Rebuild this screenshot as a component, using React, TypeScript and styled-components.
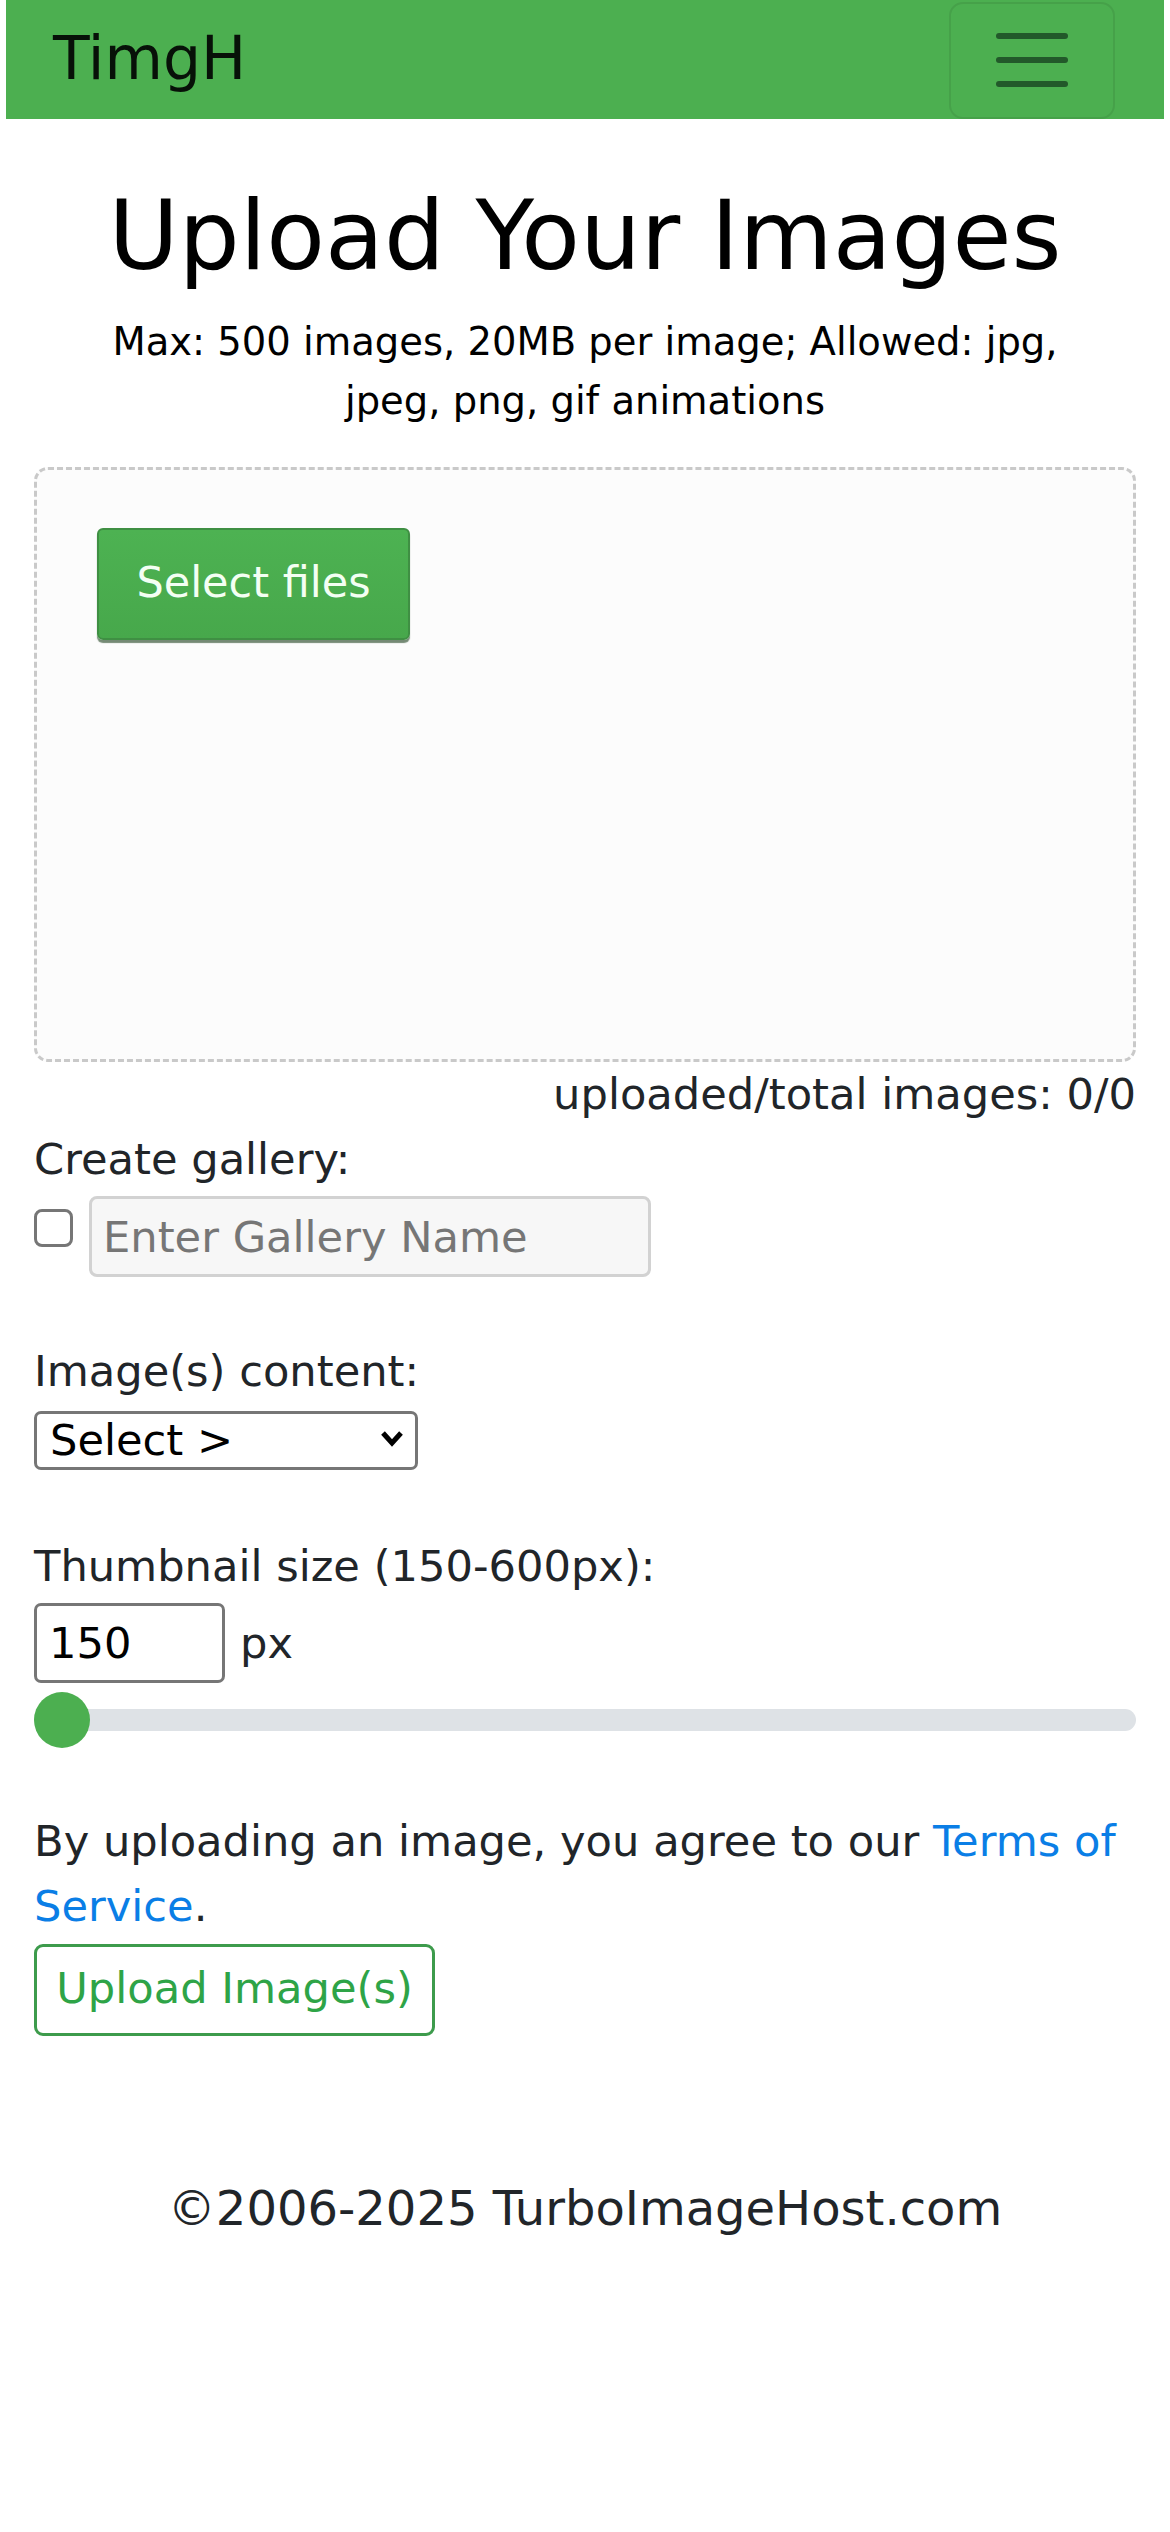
import styled, { createGlobalStyle } from "styled-components";

const GlobalStyle = createGlobalStyle`
  html, body {
    margin: 0;
    padding: 0;
    background: #fff;
  }
  body {
    font-family: "DejaVu Sans", "Noto Sans", sans-serif;
    font-size: 43.2px;
    line-height: 64.8px;
    color: #212529;
  }
  * {
    box-sizing: border-box;
  }
`;

const Page = styled.div`
  padding: 0 6px;
`;

const Navbar = styled.nav`
  height: 119px;
  background: #4caf50;
  display: flex;
  align-items: center;
  justify-content: space-between;
  padding: 0 49px 0 47px;
`;

const Brand = styled.a`
  font-size: 60px;
  line-height: 1;
  color: rgba(0, 0, 0, 0.9);
  text-decoration: none;
  padding-bottom: 4px;
`;

const Toggler = styled.button`
  width: 166px;
  height: 117px;
  border: 2px solid rgba(0, 0, 0, 0.08);
  border-radius: 14px;
  background: transparent;
  display: flex;
  align-items: center;
  justify-content: center;
  padding: 0;
  margin-top: 1px;
`;

const Main = styled.main`
  padding: 0 28px;
`;

const Title = styled.h1`
  margin: 60px 0 18px;
  font-size: 96px;
  font-weight: normal;
  line-height: 1.2;
  text-align: center;
  color: #000;
`;

const Subtitle = styled.p`
  margin: 0 auto 37px;
  max-width: 990px;
  font-size: 38.5px;
  line-height: 59px;
  text-align: center;
  color: #000;
`;

const DropZone = styled.div`
  height: 595px;
  border: 3px dashed #c9c9c9;
  border-radius: 14px;
  background: #fcfcfc;
  padding: 58px 60px;
`;

const SelectFilesButton = styled.button`
  width: 313px;
  height: 112px;
  font-family: inherit;
  font-size: 43px;
  color: #f3fff3;
  background: linear-gradient(#4db252, #47a84b);
  border: 2px solid #3f8f43;
  border-radius: 6px;
  box-shadow: 0 3px 1px rgba(60, 90, 60, 0.7);
  padding: 0 0 4px;
`;

const Counter = styled.div`
  text-align: right;
`;

const FieldLabel = styled.label<{ $gap: number }>`
  display: block;
  margin-top: ${({ $gap }) => $gap}px;
  margin-bottom: 4.5px;
`;

const GalleryRow = styled.div`
  display: flex;
  align-items: flex-start;
  gap: 16px;
`;

const Checkbox = styled.input`
  appearance: none;
  width: 39px;
  height: 38px;
  margin: 13px 0 0;
  border: 3px solid #767676;
  border-radius: 8px;
  background: #fff;
`;

const GalleryInput = styled.input`
  width: 562px;
  height: 81px;
  padding: 0 11px;
  font-family: inherit;
  font-size: 43.2px;
  background: #f7f7f7;
  border: 3px solid #d2d2d2;
  border-radius: 8px;
  color: #212529;

  &::placeholder {
    color: #767676;
  }
`;

const SelectWrap = styled.div`
  position: relative;
  width: 384px;
  height: 59px;
`;

const ContentSelect = styled.select`
  appearance: none;
  width: 100%;
  height: 100%;
  padding: 0 0 0 13px;
  font-family: inherit;
  font-size: 43.2px;
  color: #000;
  background: #fff;
  border: 3px solid #767676;
  border-radius: 7px;
`;

const Chevron = styled.svg`
  position: absolute;
  right: 13px;
  top: 21px;
  pointer-events: none;
`;

const SizeRow = styled.div`
  display: flex;
  align-items: baseline;
  gap: 15px;
`;

const SizeInput = styled.input`
  appearance: textfield;
  width: 191px;
  height: 80px;
  padding: 0 12px;
  font-family: inherit;
  font-size: 43.2px;
  color: #000;
  border: 3px solid #767676;
  border-radius: 7px;

  &::-webkit-inner-spin-button,
  &::-webkit-outer-spin-button {
    -webkit-appearance: none;
    margin: 0;
  }
`;

const Range = styled.input`
  appearance: none;
  display: block;
  width: 100%;
  height: 57px;
  margin: 9px 0 0;
  background: transparent;

  &::-webkit-slider-runnable-track {
    height: 22px;
    border-radius: 11px;
    background: #dee2e6;
  }

  &::-webkit-slider-thumb {
    appearance: none;
    width: 56px;
    height: 56px;
    margin-top: -17px;
    border-radius: 50%;
    background: #4caf50;
    border: 0;
  }
`;

const Terms = styled.p`
  margin: 60.5px 0 5px;
`;

const TermsLink = styled.a`
  color: #0a7ee6;
  text-decoration: none;
`;

const UploadButton = styled.button`
  display: block;
  width: 401px;
  height: 92px;
  font-family: inherit;
  font-size: 43.2px;
  color: #2ea447;
  background: #fff;
  border: 3px solid #3d9b4c;
  border-radius: 9px;
  padding: 0 0 4px;
`;

const Footer = styled.footer`
  margin-top: 136px;
  font-size: 48px;
  line-height: 72px;
  text-align: center;
  color: #212529;
`;

function App() {
  return (
    <Page>
      <GlobalStyle />
      <Navbar>
        <Brand href="#">TimgH</Brand>
        <Toggler aria-label="Toggle navigation">
          <svg width="72" height="54" viewBox="0 0 72 54">
            <g stroke="#22592a" strokeWidth="6" strokeLinecap="round">
              <line x1="3" y1="3" x2="69" y2="3" />
              <line x1="3" y1="27" x2="69" y2="27" />
              <line x1="3" y1="51" x2="69" y2="51" />
            </g>
          </svg>
        </Toggler>
      </Navbar>
      <Main>
        <Title>Upload Your Images</Title>
        <Subtitle>
          Max: 500 images, 20MB per image; Allowed: jpg, jpeg, png, gif
          animations
        </Subtitle>
        <DropZone>
          <SelectFilesButton>Select files</SelectFilesButton>
        </DropZone>
        <Counter>uploaded/total images: 0/0</Counter>
        <FieldLabel $gap={0}>Create gallery:</FieldLabel>
        <GalleryRow>
          <Checkbox type="checkbox" />
          <GalleryInput type="text" placeholder="Enter Gallery Name" />
        </GalleryRow>
        <FieldLabel $gap={61.5}>Image(s) content:</FieldLabel>
        <SelectWrap>
          <ContentSelect defaultValue="">
            <option value="">Select &gt;</option>
            <option value="all">All ages</option>
            <option value="adult">Adult</option>
          </ContentSelect>
          <Chevron width="26" height="18" viewBox="0 0 26 18">
            <polyline
              points="4,4 13,14 22,4"
              fill="none"
              stroke="#000"
              strokeWidth="5"
            />
          </Chevron>
        </SelectWrap>
        <FieldLabel $gap={66.5}>Thumbnail size (150-600px):</FieldLabel>
        <SizeRow>
          <SizeInput type="number" defaultValue={150} />
          <span>px</span>
        </SizeRow>
        <Range type="range" min={150} max={600} defaultValue={150} />
        <Terms>
          By uploading an image, you agree to our{" "}
          <TermsLink href="#">Terms of Service</TermsLink>.
        </Terms>
        <UploadButton>Upload Image(s)</UploadButton>
        <Footer>©2006-2025 TurboImageHost.com</Footer>
      </Main>
    </Page>
  );
}

export default App;
